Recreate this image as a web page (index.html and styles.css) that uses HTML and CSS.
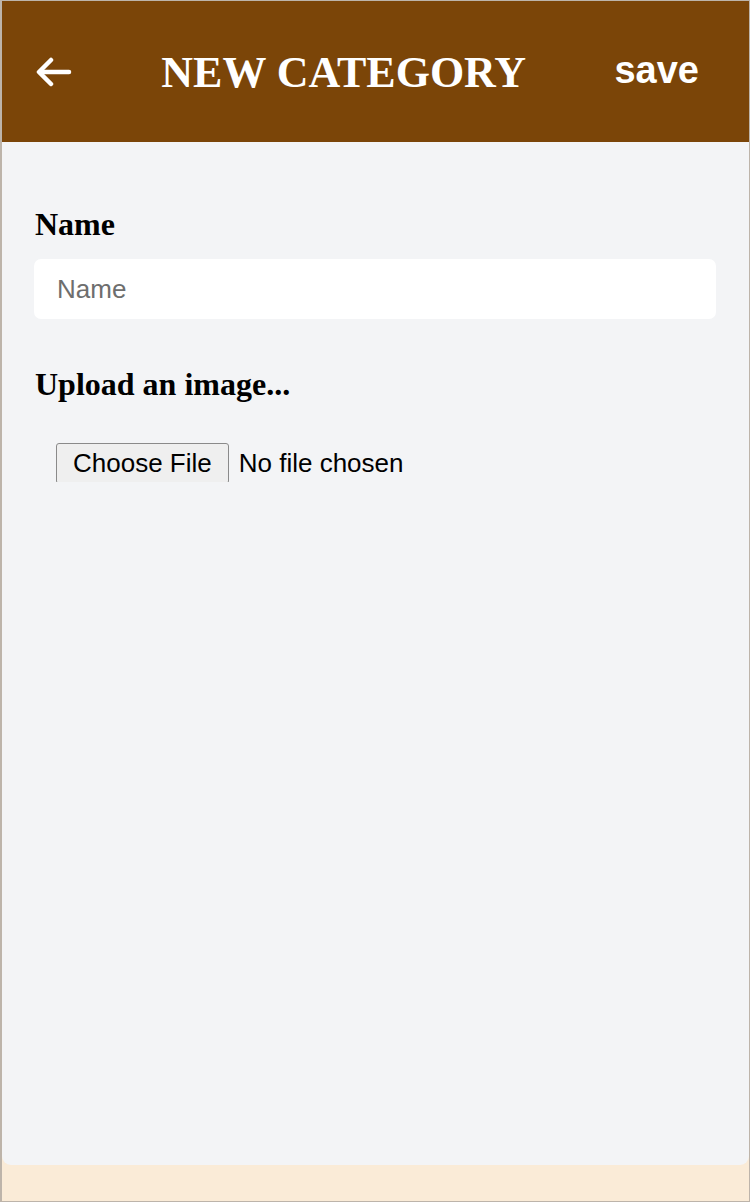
FILE: index.html
```html
<!DOCTYPE html>
<html lang="en">
<head>
<meta charset="utf-8">
<title>New Category</title>
<link rel="stylesheet" href="styles.css">
</head>
<body>
<div class="frame">
  <div class="main">
    <header class="topbar">
      <button class="back" aria-label="Back">
        <svg width="36" height="30" viewBox="0 0 36 30" fill="none" stroke="#ffffff" stroke-width="4.5" stroke-linecap="round" stroke-linejoin="round">
          <path d="M33 15 H4"/>
          <path d="M15 3 L3 15 L15 27"/>
        </svg>
      </button>
      <h1 class="title">NEW CATEGORY</h1>
      <button class="save">save</button>
    </header>
    <form class="form">
      <label class="label" for="name">Name</label>
      <input class="text-input" id="name" type="text" placeholder="Name">
      <label class="label upload-label" for="file">Upload an image...</label>
      <div class="file-wrap">
        <input class="file-input" id="file" type="file">
      </div>
    </form>
  </div>
</div>
</body>
</html>
```

FILE: styles.css
```css
* { box-sizing: border-box; }
html, body { margin: 0; padding: 0; }
body { width: 750px; height: 1202px; }
.frame {
  width: 750px;
  height: 1202px;
  border: 1px solid #bdb4aa;
  border-left-width: 2px;
  background: #faebd7;
  display: flex;
  flex-direction: column;
}
.main {
  height: 1164px;
  background: #f3f4f6;
  border-radius: 0 0 9px 9px;
  display: flex;
  flex-direction: column;
}
.topbar {
  height: 141px;
  background: #7b4508;
  display: flex;
  align-items: center;
  justify-content: space-between;
  padding: 0 50px 0 33px;
}
.back {
  background: none;
  border: 0;
  padding: 0;
  width: 38px;
  height: 30px;
  display: flex;
  align-items: center;
  justify-content: center;
}
.title {
  margin: 0;
  font-family: "Liberation Serif", "Times New Roman", serif;
  font-weight: bold;
  font-size: 44px;
  color: #ffffff;
  line-height: 1;
  padding-top: 2px;
}
.save {
  background: none;
  border: 0;
  padding: 0;
  font-family: "Liberation Sans", Arial, sans-serif;
  font-weight: bold;
  font-size: 38px;
  color: #ffffff;
  line-height: 1;
  margin-bottom: 4px;
}
.form {
  display: flex;
  flex-direction: column;
  align-items: flex-start;
  padding: 0 33px 0 32px;
}
.label {
  margin-top: 64px;
  margin-left: 1px;
  font-family: "Liberation Serif", "Times New Roman", serif;
  font-weight: bold;
  font-size: 32px;
  line-height: 36px;
  color: #000000;
}
.upload-label { margin-top: 47px; }
.text-input {
  margin-top: 17px;
  width: 100%;
  height: 60px;
  border: 0;
  border-radius: 7px;
  background: #ffffff;
  padding: 0 23px;
  font-family: "Liberation Sans", Arial, sans-serif;
  font-size: 26px;
  color: #111;
  outline: none;
}
.text-input::placeholder { color: #6e6e6e; }
.file-wrap {
  margin-top: 41px;
  margin-left: 22px;
  height: 39px;
  overflow: hidden;
}
.file-input {
  font-family: "Liberation Sans", Arial, sans-serif;
  font-size: 26px;
  color: #000;
}
.file-input::file-selector-button {
  font-family: "Liberation Sans", Arial, sans-serif;
  font-size: 26px;
  padding: 4px 16px 4px;
  margin-right: 10px;
  border: 1px solid #8a8a8a;
  border-radius: 3px;
  background: #efefef;
  color: #000;
}
```
